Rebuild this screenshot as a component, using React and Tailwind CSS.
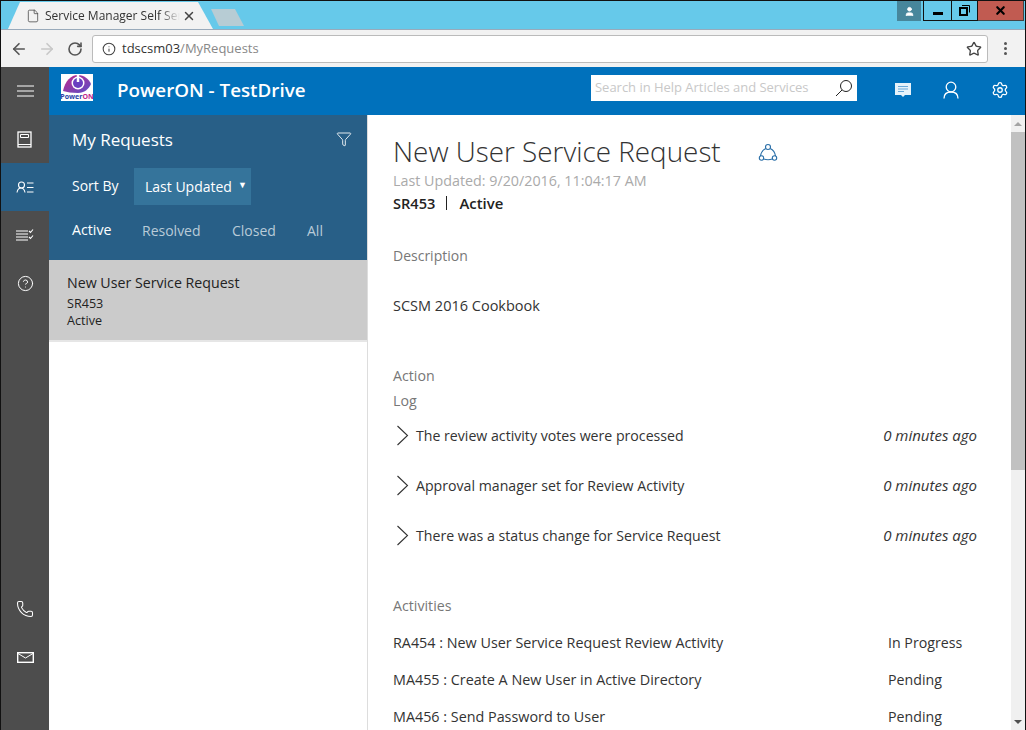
import React from 'react';
import { CircleHelp, Phone, User, Filter, Star, ArrowLeft, ArrowRight, RotateCw, Info, File, X } from 'lucide-react';

const F = '[font-family:"Open_Sans","Noto_Sans",sans-serif]';

function LogRow({ text }) {
  return (
    <div className="flex items-center h-[50px]">
      <svg width="12" height="21" viewBox="0 0 12 21" fill="none" stroke="#333" strokeWidth="1.1" className="ml-[4px] mr-[7px] shrink-0"><path d="M0.500 1l10 9.500-10 9.500" /></svg>
      <span className="flex-1 text-[14.15px] text-[#333] mt-[2px]">{text}</span>
      <span className="italic text-[15px] text-[#333] mr-[34px]">0 minutes ago</span>
    </div>
  );
}

function ActivityRow({ text, status }) {
  return (
    <div className="flex items-center h-[37px] text-[14.35px] text-[#333]">
      <span className="w-[495px]">{text}</span>
      <span className="text-[14.2px]">{status}</span>
    </div>
  );
}

function RailItem({ active, children }) {
  return <div className={`h-[48px] flex items-center justify-center ${active ? 'bg-[#285f87]' : ''}`}>{children}</div>;
}

export default function App() {
  return (
    <div className={`w-[1026px] h-[730px] overflow-hidden flex flex-col bg-white border-x border-t border-[#111] ${F}`}>
      <div className="h-[28px] bg-[#66c9ea] flex justify-between shrink-0">
        <div className="flex items-end pl-[7px]">
          <div className="w-[205px] h-[27px] bg-[#f2f2f2] [clip-path:polygon(0_100%,12px_0,190px_0,205px_100%)] flex items-center pl-[18px] text-[12px] text-[#333]">
            <File size={14} strokeWidth={1.3} className="text-[#444] mr-[5px] shrink-0" />
            <span className="w-[135px] whitespace-nowrap [mask-image:linear-gradient(to_right,black_85%,transparent_100%)]">Service Manager Self Ser</span>
            <X size={14} strokeWidth={2.5} className="text-[#444] ml-[2px] shrink-0" />
          </div>
          <div className="ml-[-2px] mb-[3px] w-[33px] h-[17px] bg-[#b7ccd4] [clip-path:polygon(0_0,24px_0,33px_100%,8px_100%)]"></div>
        </div>
        <div className="flex items-start mr-[1px]">
          <div className="w-[24px] h-[20px] bg-[#47869b] flex items-center justify-center mr-[2px]">
            <User size={11} fill="white" className="text-white" />
          </div>
          <div className="w-[29px] h-[20px] border border-[#111] border-t-0 flex items-end justify-center pb-[5px]"><div className="w-[10px] h-[3px] bg-black"></div></div>
          <div className="w-[26px] h-[20px] border-b border-r border-[#111] flex items-center justify-center">
            <svg width="11" height="11" viewBox="0 0 11 11" fill="none" stroke="black"><path d="M3 .5h7.500v7" /><rect x="1" y="3" width="7" height="7" strokeWidth="2" /></svg>
          </div>
          <div className="w-[46px] h-[20px] bg-[#c15b51] border-b border-r border-[#444] flex items-center justify-center">
            <X size={13} strokeWidth={4} className="text-black" />
          </div>
        </div>
      </div>
      <div className="h-[38px] bg-[#f2f2f2] flex items-center shrink-0 border-t border-[#9ab]">
        <ArrowLeft size={18} strokeWidth={2.2} className="text-[#555] ml-[9px]" />
        <ArrowRight size={18} strokeWidth={2.2} className="text-[#c8c8c8] ml-[10px]" />
        <RotateCw size={16} strokeWidth={2.4} className="text-[#555] ml-[11px]" />
        <div className="ml-[9px] w-[896px] h-[28px] bg-white border border-[#bbb] rounded-[3px] flex items-center pl-[9px] pr-[5px]">
          <Info size={14} strokeWidth={1.8} className="text-[#444]" />
          <span className="ml-[6px] text-[13px]"><span className="text-[#333]">tdscsm03</span><span className="text-[#888]">/MyRequests</span></span>
          <Star size={16} strokeWidth={2} className="text-[#444] ml-auto" />
        </div>
        <div className="ml-[16px] flex flex-col gap-[2px]">
          <div className="w-[3px] h-[3px] rounded-full bg-[#555]"></div>
          <div className="w-[3px] h-[3px] rounded-full bg-[#555]"></div>
          <div className="w-[3px] h-[3px] rounded-full bg-[#555]"></div>
        </div>
      </div>
      <div className="flex-1 flex min-h-0">
        <div className="w-[48px] bg-[#4d4d4d] flex flex-col shrink-0 text-white">
          <RailItem>
            <svg width="17" height="12" viewBox="0 0 17 12" stroke="white" strokeWidth="1"><path d="M0 1h17M0 6h17M0 11h17" /></svg>
          </RailItem>
          <RailItem>
            <svg width="15" height="17" viewBox="0 0 15 17" fill="none" stroke="white" strokeWidth="1.300" className="mr-[1px]"><rect x="1" y="1" width="13" height="15" /><path d="M1 13.500h13M3.500 3.500h8v3h-8z" strokeWidth="1" /></svg>
          </RailItem>
          <RailItem active>
            <svg width="18" height="13" viewBox="0 0 18 13" fill="none" stroke="white" strokeWidth="1.100"><circle cx="5.500" cy="4" r="3" /><path d="M1 11.500c.5-3 2-4.500 4-4.500 2.500 0 3.500 2 4 4.500M11 2h6.500M11 6.500h6.500M11 11h6.500" /></svg>
          </RailItem>
          <RailItem>
            <svg width="18" height="14" viewBox="0 0 18 14" fill="none" stroke="white" strokeWidth="1.100"><path d="M0 3h12M0 6h12M0 9h12M0 12h12M13 3l1.500 1.500 2.500-3M13 9l1.500 1.500 2.500-3" /></svg>
          </RailItem>
          <RailItem><CircleHelp size={17} strokeWidth={1.4} /></RailItem>
          <div className="mt-auto mb-[49px] flex flex-col">
            <RailItem><Phone size={18} strokeWidth={1.4} /></RailItem>
            <RailItem>
              <svg width="17" height="11" viewBox="0 0 17 11" fill="none" stroke="white" strokeWidth="1.400"><rect x=".7" y=".7" width="15.600" height="9.600" /><path d="M1 1.500l7.500 4.500 7.500-4.500" strokeWidth="1" /></svg>
            </RailItem>
          </div>
        </div>
        <div className="flex-1 flex flex-col min-w-0">
          <div className="h-[48px] bg-[#0071bc] flex items-center shrink-0 text-white">
            <div className="w-[32px] h-[27px] bg-white ml-[12px] mb-[8px] flex flex-col items-center overflow-hidden">
              <svg width="30" height="19" viewBox="0 0 30 19">
                <defs><linearGradient id="eye" x1="0" y1="0" x2="1" y2="1"><stop offset="0" stopColor="#c2288a" /><stop offset="1" stopColor="#5a4fc8" /></linearGradient></defs>
                <path d="M1 17C3 7 9 1 16 1c6 0 11 4 13 9-2 5-7 9-13 9-6 0-11-1-15-2z" fill="url(#eye)" />
                <circle cx="16" cy="9" r="6.500" fill="white" />
                <circle cx="16" cy="9" r="5" fill="#6a3fc0" />
                <path d="M16 1v7" stroke="white" strokeWidth="2.500" />
              </svg>
              <span className="text-[7px] font-bold leading-[8px] whitespace-nowrap"><span className="text-[#2a3fa8]">Power</span><span className="text-[#c2288a]">ON</span></span>
            </div>
            <span className="ml-[24px] mb-[2px] text-[18.800px] font-semibold">PowerON - TestDrive</span>
            <div className="ml-auto w-[266px] h-[26px] mb-[6px] bg-white flex items-center pl-[4px] pr-[4px] mr-[38px]">
              <span className="text-[13px] text-[#c8c8c8] whitespace-nowrap tracking-[-0.02px]">Search in Help Articles and Services</span>
              <svg width="18" height="18" viewBox="0 0 18 18" fill="none" stroke="#222" strokeWidth="1" className="ml-auto"><circle cx="11" cy="7" r="5.500" /><path d="M7 11l-6 6" /></svg>
            </div>
            <svg width="16" height="16" viewBox="0 0 16 16" className="mr-[32px] mb-[3px]"><path d="M0 1h16v12H10l-2 2-2-2H0z" fill="#e6f2fa" /><path d="M3 4.500h10M3 7h10M3 9.500h6" stroke="#6aa9d8" /></svg>
            <svg width="16" height="18" viewBox="0 0 16 18" fill="none" stroke="white" strokeWidth="1.300" className="mr-[32px] mb-[3px]"><circle cx="8" cy="6" r="4.800" /><path d="M1 17.500c0-4 2.500-6.500 7-6.500s7 2.500 7 6.500" /></svg>
            <svg width="18" height="18" viewBox="0 0 24 24" fill="none" stroke="white" strokeWidth="1.700" strokeLinecap="round" strokeLinejoin="round" className="mr-[16px] mb-[3px]"><path d="M9.671 4.136a2.340 2.340 0 0 1 4.659 0 2.340 2.340 0 0 0 3.319 1.915 2.340 2.340 0 0 1 2.330 4.033 2.340 2.340 0 0 0 0 3.831 2.340 2.340 0 0 1-2.330 4.033 2.340 2.340 0 0 0-3.319 1.915 2.340 2.340 0 0 1-4.659 0 2.340 2.340 0 0 0-3.320-1.915 2.340 2.340 0 0 1-2.330-4.033 2.340 2.340 0 0 0 0-3.831A2.340 2.340 0 0 1 6.350 6.051a2.340 2.340 0 0 0 3.319-1.915" /><circle cx="12" cy="12" r="3" /></svg>
          </div>
          <div className="flex-1 flex min-h-0">
            <div className="w-[318px] shrink-0 flex flex-col text-white">
              <div className="h-[145px] bg-[#285f87] pl-[23px] pr-[15px] shrink-0">
                <div className="h-[50px] flex items-center justify-between text-[17px]">
                  <span>My Requests</span>
                  <Filter size={16} strokeWidth={1.3} className="mb-[2px]" />
                </div>
                <div className="flex items-center h-[37px] mt-[3px] text-[14px]">
                  <span className="w-[62px] mb-[2px]">Sort By</span>
                  <div className="h-[37px] w-[117px] bg-[#35749b] flex items-center pl-[11px] text-[14px]">
                    Last Updated<span className="ml-[6px] text-[9px] mb-[3px]">▼</span>
                  </div>
                </div>
                <div className="flex items-center h-[50px] text-[14px] text-[#b9cbd8]">
                  <span className="text-white w-[70px] text-[14.2px]">Active</span>
                  <span className="w-[90px]">Resolved</span>
                  <span className="w-[75px]">Closed</span>
                  <span>All</span>
                </div>
              </div>
              <div className="h-[82px] bg-[#cbcbcb] border-b-2 border-[#e6e6e6] pl-[18px] pt-[13px] text-[#222] shrink-0">
                <div className="text-[14.2px] leading-[20px]">New User Service Request</div>
                <div className="text-[12.600px] leading-[17px] mt-[2px]">SR453</div>
                <div className="text-[12.600px] leading-[17px]">Active</div>
              </div>
            </div>
            <div className="flex-1 min-w-0 flex border-l border-[#ddd]">
              <div className="flex-1 min-w-0 overflow-hidden pl-[25px]">
                <div className="flex items-center mt-[17px] h-[40px]">
                  <span className="text-[27.850px] font-light text-[#333] whitespace-nowrap">New User Service Request</span>
                  <svg width="20" height="20" viewBox="0 0 20 20" fill="none" stroke="#2a6fa8" strokeWidth="1.100" className="ml-[37px] mt-[2px]"><circle cx="10" cy="4" r="2.500" /><circle cx="3.500" cy="15" r="2.200" /><circle cx="16.500" cy="15" r="2.200" /><path d="M7.800 5.500C4.500 7 3 9.500 2.500 13M12.200 5.500C15.500 7 17 9.500 17.500 13M5.700 16c3 1 5.600 1 8.600 0" /></svg>
                </div>
                <div className="text-[14.300px] text-[#aaa] leading-[18px]">Last Updated: 9/20/2016, 11:04:17 AM</div>
                <div className="flex items-center text-[14.600px] text-[#222] font-semibold mt-[3px] leading-[20px]">
                  <span>SR453</span><span className="w-px h-[14px] bg-[#222] ml-[11px] mr-[12px]"></span><span className="text-[14.900px]">Active</span>
                </div>
                <div className="text-[14px] text-[#777] mt-[33px] leading-[20px]">Description</div>
                <div className="text-[14.500px] text-[#333] mt-[30px] leading-[20px]">SCSM 2016 Cookbook</div>
                <div className="text-[14.200px] text-[#777] mt-[50px] leading-[20px]">Action</div>
                <div className="text-[14.200px] text-[#777] mt-[5px] leading-[20px]">Log</div>
                <div className="mt-[-1px]">
                  <LogRow text="The review activity votes were processed" />
                  <LogRow text="Approval manager set for Review Activity" />
                  <LogRow text="There was a status change for Service Request" />
                </div>
                <div className="text-[14.200px] text-[#777] mt-[36px] leading-[20px]">Activities</div>
                <div className="mt-[8px]">
                  <ActivityRow text="RA454 : New User Service Request Review Activity" status="In Progress" />
                  <ActivityRow text="MA455 : Create A New User in Active Directory" status="Pending" />
                  <ActivityRow text="MA456 : Send Password to User" status="Pending" />
                </div>
              </div>
              <div className="w-[14px] shrink-0 bg-[#f0f0f0] flex flex-col">
                <div className="h-[17px] flex items-center justify-center"><div className="w-0 h-0 border-x-[4px] border-x-transparent border-b-[4px] border-b-[#a3a3a3]"></div></div>
                <div className="h-[338px] bg-[#c1c1c1]"></div>
                <div className="mt-auto h-[17px] flex items-center justify-center"><div className="w-0 h-0 border-x-[4px] border-x-transparent border-t-[4px] border-t-[#505050]"></div></div>
              </div>
            </div>
          </div>
        </div>
      </div>
    </div>
  );
}
